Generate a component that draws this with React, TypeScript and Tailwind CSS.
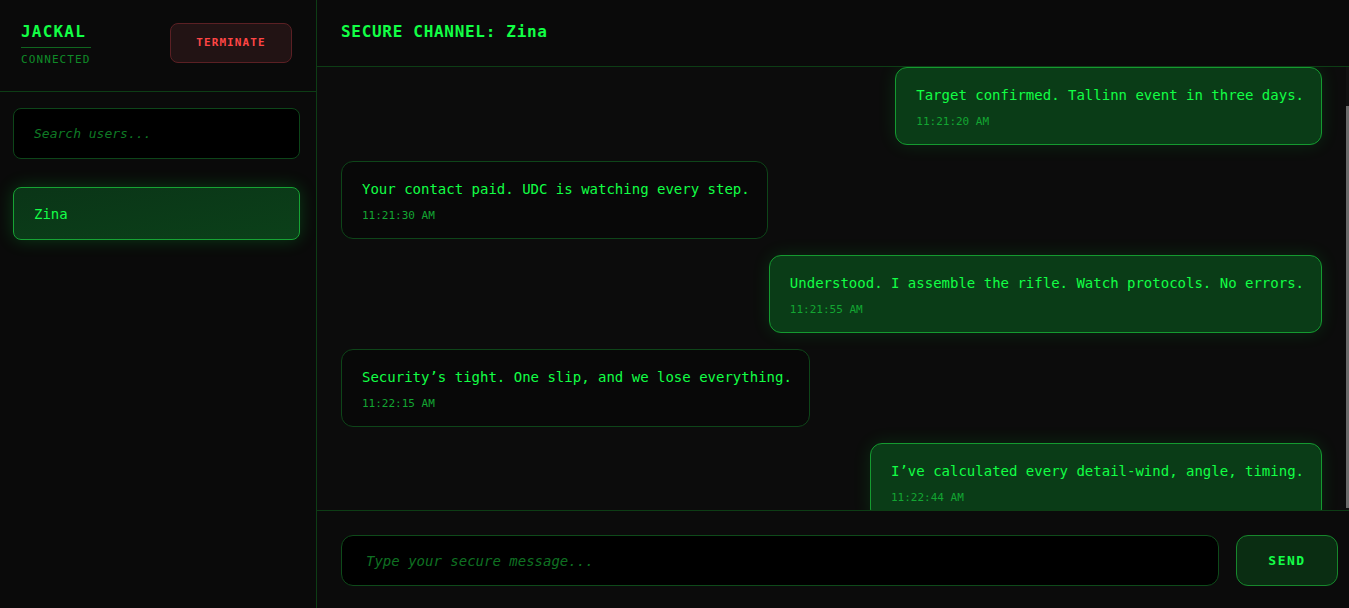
const messages = [
  { text: 'Target confirmed. Tallinn event in three days.', time: '11:21:20 AM', mine: true },
  { text: 'Your contact paid. UDC is watching every step.', time: '11:21:30 AM', mine: false },
  { text: 'Understood. I assemble the rifle. Watch protocols. No errors.', time: '11:21:55 AM', mine: true },
  { text: 'Security\u2019s tight. One slip, and we lose everything.', time: '11:22:15 AM', mine: false },
  { text: 'I\u2019ve calculated every detail-wind, angle, timing.', time: '11:22:44 AM', mine: true },
];

function Bubble({ text, time, mine }: { text: string; time: string; mine: boolean }) {
  return (
    <div className={mine ? 'flex justify-end' : 'flex justify-start'}>
      <div
        className={
          mine
            ? 'rounded-xl border border-[#159a30] bg-[#0a3c17] pl-5 pr-[17px] pt-[17px] pb-[15px] shadow-[0_0_18px_rgba(0,255,65,0.12)]'
            : 'rounded-xl border border-[#0e4519] bg-[#080808] pl-5 pr-[17px] pt-[17px] pb-[15px]'
        }
      >
        <p className="text-[14px] leading-[21px] text-[#12ff45] whitespace-nowrap">{text}</p>
        <p className="mt-2 text-[11px] leading-[15px] text-[#13a532]">{time}</p>
      </div>
    </div>
  );
}

export default function App() {
  return (
    <div
      className="flex h-[608px] w-full overflow-hidden bg-[#0b0b0b] text-[#12ff45]"
      style={{ fontFamily: '"DejaVu Sans Mono", "Liberation Mono", monospace' }}
    >
      {/* sidebar */}
      <aside className="flex w-[317px] shrink-0 flex-col border-r border-[#0d3d15] bg-[#0a0a0a]">
        <div className="flex h-[92px] items-center justify-between border-b border-[#0d3d15] pl-[21px] pr-6">
          <div className="-mt-[3px]">
            <h1 className="border-b border-[#10661f] pb-[5px] text-[16px] font-bold leading-[20px] tracking-[1.2px] text-[#12ff45]">
              JACKAL
            </h1>
            <p className="mt-[5px] text-[11px] leading-[14px] tracking-[1.1px] text-[#0f8a28]">CONNECTED</p>
          </div>
          <button className="mb-[5px] h-[40px] w-[122px] rounded-lg border border-[#5b2024] bg-[#221314] text-[11px] font-bold tracking-[1.1px] text-[#ff4545]">
            TERMINATE
          </button>
        </div>

        <div className="pl-[13px] pr-4 pt-4">
          <div className="flex h-[51px] items-center rounded-lg border border-[#0d4519] bg-black pl-5">
            <span className="text-[13px] italic text-[#0f7a25]">Search users...</span>
          </div>
          <div className="mt-[28px] flex h-[53px] items-center rounded-lg border border-[#17a334] bg-gradient-to-br from-[#0a3517] to-[#0b4019] pl-5 shadow-[0_0_18px_rgba(0,255,65,0.2)]">
            <span className="mt-[2px] text-[14px] text-[#14ff48]">Zina</span>
          </div>
        </div>
      </aside>

      {/* main */}
      <main className="flex min-w-0 flex-1 flex-col bg-[#0c0c0c]">
        <header className="flex h-[67px] shrink-0 items-center border-b border-[#0d3d15] bg-[#0a0a0a] pl-6">
          <h2 className="-mt-[2px] text-[16px] font-bold tracking-[0.7px] text-[#12ff45]">SECURE CHANNEL: Zina</h2>
        </header>

        <div className="relative flex-1 overflow-hidden">
          <div className="flex flex-col gap-4 pl-6 pr-[27px]">
            {messages.map((m, i) => (
              <Bubble key={i} {...m} />
            ))}
          </div>
          {/* scrollbar */}
          <div className="absolute right-0 top-0 h-full w-[3px] bg-[#111111]">
            <div className="mt-[39px] h-[402px] w-full bg-[#6b6b6b]" />
          </div>
        </div>

        <div className="flex h-[98px] shrink-0 items-start gap-[17px] border-t border-[#0d3d15] bg-[#0b0b0b] pl-6 pr-[11px] pt-6">
          <div className="flex h-[51px] flex-1 items-center rounded-xl border border-[#0e4a1a] bg-black pl-6">
            <span className="mt-[2px] text-[14px] italic text-[#0f7022]">Type your secure message...</span>
          </div>
          <button className="h-[51px] w-[102px] rounded-xl border border-[#17872c] bg-[#0a2d12] text-[13px] font-bold tracking-[1.5px] text-[#14ff48]">
            SEND
          </button>
        </div>
      </main>
    </div>
  );
}
